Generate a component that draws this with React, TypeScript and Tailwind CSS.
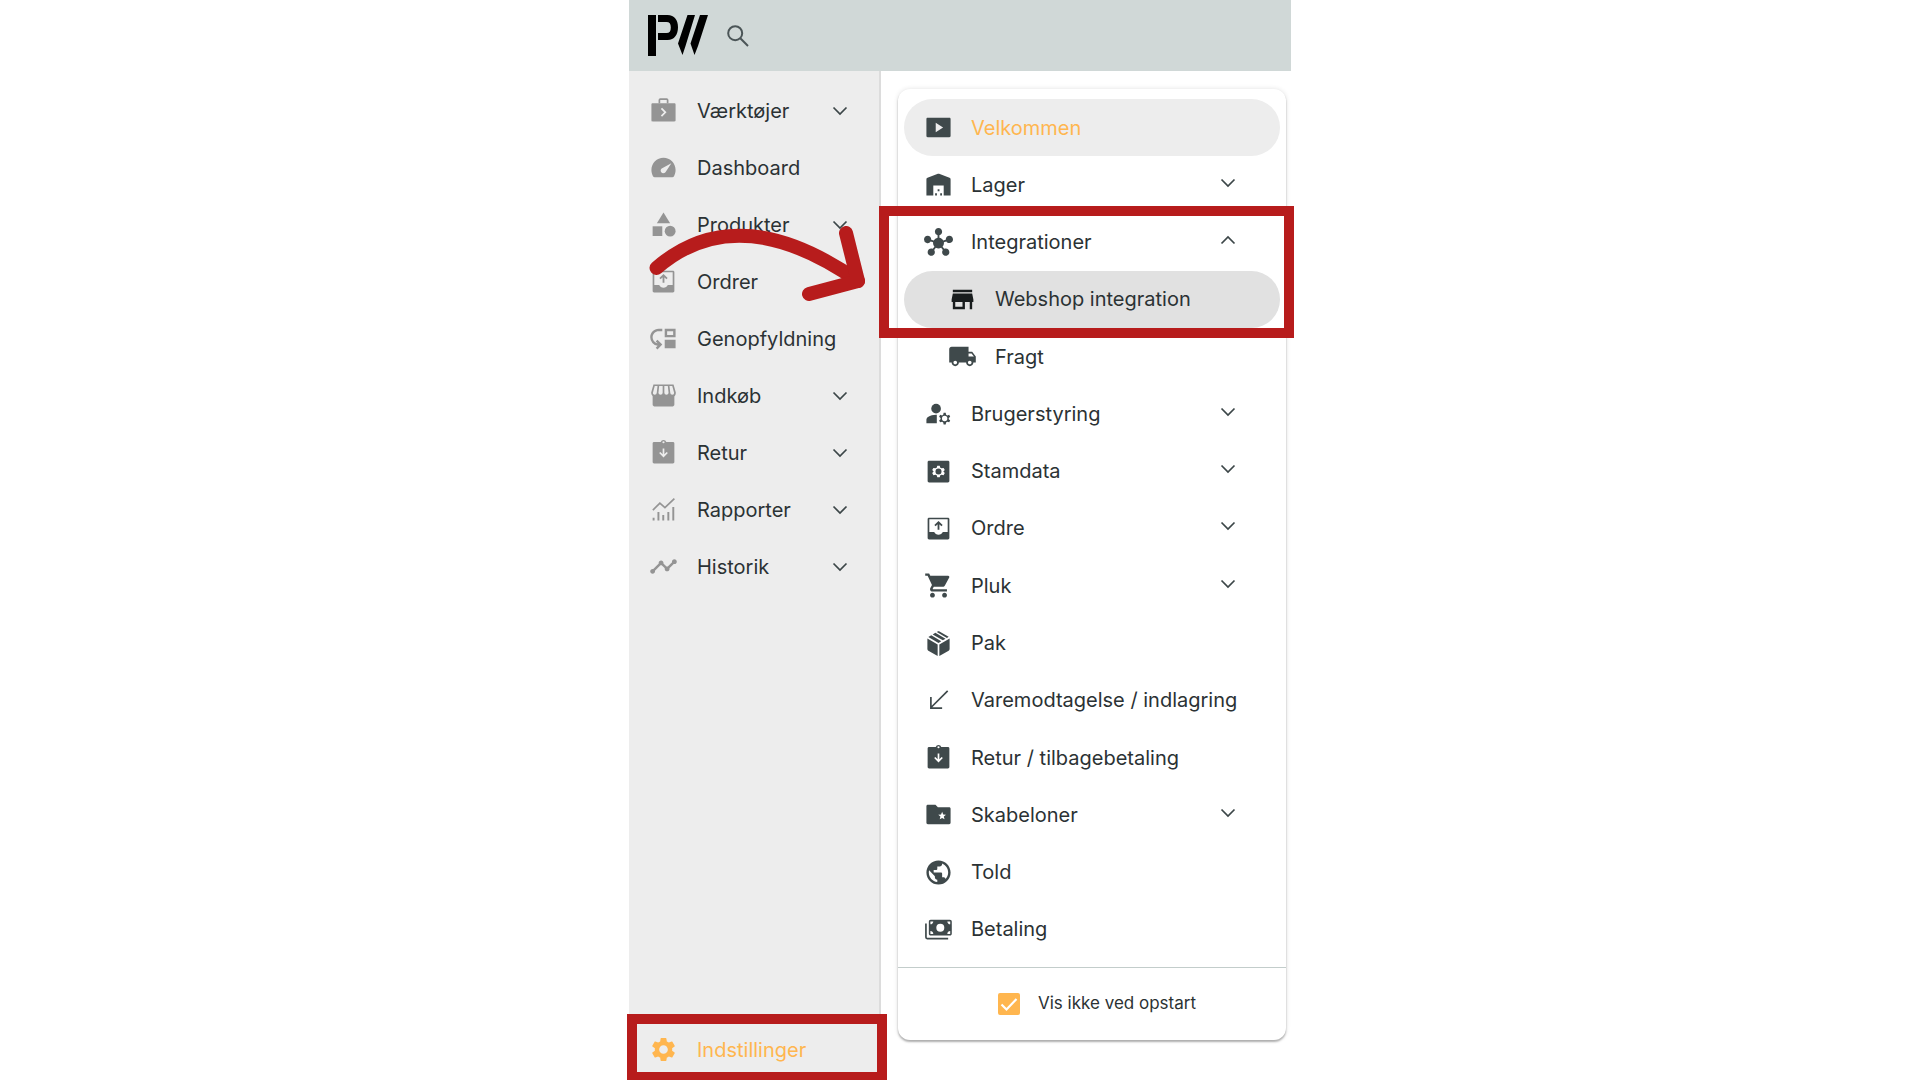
import type { ComponentType, ReactNode } from 'react';
import {
  MdCategory,
  MdHub,
  MdLocalShipping,
  MdMoveDown,
  MdPublic,
  MdSettings,
  MdShoppingCart,
  MdStore,
  MdTimeline,
} from 'react-icons/md';

type IconProps = { className?: string };
type Icon = ComponentType<IconProps>;

function Svg({ className, children }: { className?: string; children: ReactNode }) {
  return (
    <svg viewBox="0 0 24 24" fill="currentColor" className={className} aria-hidden="true">
      {children}
    </svg>
  );
}

function ToolsIcon({ className }: IconProps) {
  return (
    <Svg className={className}>
      <path d="M8.600 6V3.400C8.600 2.900 8.900 2.600 9.400 2.600h5.200c.5 0 .8.300.8.800V6" fill="none" stroke="currentColor" strokeWidth="1.400" />
      <path
        fillRule="evenodd"
        d="M3 6h18c.6 0 1 .4 1 1v13c0 .6-.4 1-1 1H3c-.6 0-1-.4-1-1V7c0-.6.4-1 1-1zM10.800 9.800l-1 1 2.700 2.700-2.700 2.700 1 1 3.700-3.700z"
      />
    </Svg>
  );
}

function GaugeIcon({ className }: IconProps) {
  return (
    <Svg className={className}>
      <path
        fillRule="evenodd"
        d="M12 4C6.500 4 2 8.500 2 14c0 1.900.5 3.700 1.300 5.200.3.500.8.800 1.400.8h14.600c.6 0 1.100-.3 1.400-.8.800-1.500 1.300-3.300 1.300-5.200 0-5.500-4.500-10-10-10zM18.500 8.500l-4.600 7.100c-.2.300-.4.500-.7.700-1.100.7-2.500.5-3.200-.6-.6-1-.4-2.200.5-2.900z"
      />
    </Svg>
  );
}

function TrayUpIcon({ className }: IconProps) {
  return (
    <Svg className={className}>
      <path
        fillRule="evenodd"
        d="M4.200 3h15.600c.7 0 1.200.5 1.200 1.200v15.600c0 .7-.5 1.200-1.200 1.200H4.200c-.7 0-1.200-.5-1.200-1.200V4.200C3 3.500 3.500 3 4.200 3zM4.400 4.400v10.400h4c.7 1.300 2 2.300 3.600 2.300s2.900-1 3.600-2.300h4V4.400z"
      />
      <path d="M12 13V7M9.100 9.700L12 6.800l2.900 2.900" fill="none" stroke="currentColor" strokeWidth="1.500" />
    </Svg>
  );
}

function ReturnIcon({ className }: IconProps) {
  return (
    <Svg className={className}>
      <path
        fillRule="evenodd"
        d="M4.200 3.300h5.500a2.400 2.400 0 0 1 4.600 0h5.500c.7 0 1.200.5 1.200 1.200v15.300c0 .7-.5 1.200-1.200 1.200H4.200c-.7 0-1.200-.5-1.200-1.200V4.500c0-.7.500-1.200 1.200-1.200zM12 2.600a.9.900 0 1 0 0 1.800.9.900 0 0 0 0-1.800zM11.300 8.600v4.800l-1.900-1.900-1 1 3.600 3.600 3.600-3.600-1-1-1.900 1.900V8.600z"
      />
    </Svg>
  );
}

function PlayIcon({ className }: IconProps) {
  return (
    <Svg className={className}>
      <path
        fillRule="evenodd"
        d="M3 4h18c.6 0 1 .4 1 1v14c0 .6-.4 1-1 1H3c-.6 0-1-.4-1-1V5c0-.6.4-1 1-1zM9.700 8.100v7.800l6.100-3.900z"
      />
    </Svg>
  );
}

function WarehouseIcon({ className }: IconProps) {
  return (
    <Svg className={className}>
      <path d="M2 7.800c0-.7.400-1.100.9-1.300L11.500 3.100c.3-.1.700-.1 1 0l8.600 3.400c.5.200.9.600.9 1.300V21h-5.700v-8.200H7.700V21H2z" />
      <path d="M11.300 16h1.500v1.500h-1.500zM9.200 19.300h1.500V21H9.200zM13.400 19.300h1.500V21h-1.500z" />
    </Svg>
  );
}

function GearBoxIcon({ className }: IconProps) {
  return (
    <Svg className={className}>
      <path
        fillRule="evenodd"
        d="M4.200 3h15.600c.7 0 1.200.5 1.200 1.200v15.600c0 .7-.5 1.200-1.200 1.200H4.200c-.7 0-1.200-.5-1.200-1.200V4.200C3 3.500 3.500 3 4.200 3zM11 7.200l-.5 1.600-1 .6L7.800 9l-1 1.700L8 12l-1.200 1.300 1 1.700 1.700-.4 1 .6.5 1.600h2l.5-1.600 1-.6 1.700.4 1-1.700L16 12l1.200-1.300-1-1.700-1.700.4-1-.6-.5-1.600zM12 9.500a2.500 2.500 0 1 1 0 5 2.500 2.500 0 0 1 0-5z"
      />
    </Svg>
  );
}

function UserGearIcon({ className }: IconProps) {
  return (
    <Svg className={className}>
      <circle cx="10" cy="8" r="4" />
      <path d="M2 20v-2.800c0-1 .5-1.800 1.300-2.300C5.200 13.700 7.600 13 10 13h.6v7z" />
      <g transform="translate(6.900 5.800) scale(.85)">
        <path
          fillRule="evenodd"
          d="M11 6.600l-.4 1.900-1.100.7-1.900-.6-1 1.800L8 11.600v1.300l-1.400 1.200 1 1.800 1.900-.6 1.100.7.400 1.900h2l.4-1.900 1.100-.7 1.900.6 1-1.800-1.400-1.200v-1.300l1.400-1.200-1-1.800-1.900.6-1.100-.7-.4-1.900zM12 9.600a2.600 2.600 0 1 1 0 5.200 2.600 2.600 0 0 1 0-5.200z"
        />
      </g>
    </Svg>
  );
}

function ShopIcon({ className }: IconProps) {
  return (
    <Svg className={className}>
      <path
        d="M4.200 3.500h15.600l1.700 6.200c0 1.600-1 2.500-2.300 2.500-1.300 0-2.300-.9-2.300-2.400 0 1.500-1 2.400-2.500 2.400S12 11.300 12 9.800c0 1.500-1 2.400-2.400 2.400s-2.500-.9-2.500-2.400c0 1.500-1 2.400-2.300 2.400-1.300 0-2.300-.9-2.300-2.500zM7.800 3.500l-.7 6.300M12 3.500v6.300M16.200 3.500l.7 6.300"
        fill="none"
        stroke="currentColor"
        strokeWidth="1.400"
      />
      <path d="M3 11.300h18v8.200c0 .8-.7 1.500-1.500 1.500h-15c-.8 0-1.500-.7-1.500-1.500z" />
    </Svg>
  );
}

function ReportIcon({ className }: IconProps) {
  return (
    <Svg className={className}>
      <path d="M3.200 12.500L9 6.700l4.200 3.700L21 3" fill="none" stroke="currentColor" strokeWidth="1.400" />
      <path d="M3 18.800h1.600V21H3zM7 14h1.600v7H7zM11 16.500h1.600V21H11zM15.200 14h1.600v7h-1.600zM19.300 10h1.600v11h-1.600z" />
    </Svg>
  );
}

function PackageIcon({ className }: IconProps) {
  return (
    <Svg className={className}>
      <path d="M2.800 7.900l8.500 4.900v9.500l-7.700-4.400c-.5-.3-.8-.8-.8-1.400zM21.200 7.900l-8.500 4.900v9.500l7.700-4.400c.5-.3.800-.8.800-1.400z" />
      <path d="M3.600 6.600L6 5.200l8.300 4.900L12 11.500zM7.200 4.500l2.200-1.300 8.400 4.900-2.200 1.300zM10.600 2.500l.7-.4c.5-.3 1-.3 1.500 0l7.600 4.400-1.400.9z" />
    </Svg>
  );
}

function InboundIcon({ className }: IconProps) {
  return (
    <Svg className={className}>
      <path d="M19.600 4L6 17.600M5.700 9v9.300H15" fill="none" stroke="currentColor" strokeWidth="1.400" />
    </Svg>
  );
}

function TemplatesIcon({ className }: IconProps) {
  return (
    <Svg className={className}>
      <path
        fillRule="evenodd"
        d="M3.200 4h6.300l2 2h9.300c.7 0 1.200.5 1.200 1.200v11.600c0 .7-.5 1.200-1.200 1.200H3.200c-.7 0-1.200-.5-1.200-1.200V5.200C2 4.500 2.500 4 3.200 4zM15 9.800l-.9 2.200-2.300.2 1.800 1.500-.6 2.300 2-1.200 2 1.200-.6-2.300 1.800-1.500-2.300-.2z"
      />
    </Svg>
  );
}

function CashIcon({ className }: IconProps) {
  return (
    <Svg className={className}>
      <path d="M1.600 7v11.500c0 .6.4 1 1 1H20" fill="none" stroke="currentColor" strokeWidth="1.400" />
      <path
        fillRule="evenodd"
        d="M5.500 4h16c.8 0 1.500.7 1.500 1.500v10c0 .8-.7 1.500-1.500 1.500h-16c-.8 0-1.500-.7-1.500-1.500v-10C4 4.700 4.700 4 5.500 4zM13.500 7.200a3.300 3.300 0 1 0 0 6.600 3.300 3.300 0 0 0 0-6.600zM5.300 5.300v2.400c1.300 0 2.400-1.100 2.400-2.400zM21.700 5.300h-2.400c0 1.300 1.100 2.400 2.400 2.400zM5.300 15.700h2.400c0-1.300-1.100-2.400-2.400-2.400zM21.700 15.700v-2.400c-1.300 0-2.400 1.100-2.400 2.400z"
      />
    </Svg>
  );
}

function SearchIcon({ className }: IconProps) {
  return (
    <svg viewBox="0 0 24 24" fill="none" stroke="currentColor" strokeWidth="2" className={className} aria-hidden="true">
      <circle cx="9.200" cy="9.200" r="7" />
      <path d="M14.300 14.300L22 22" />
    </svg>
  );
}

function Chevron({ up = false }: { up?: boolean }) {
  return (
    <svg viewBox="0 0 16 16" fill="none" stroke="currentColor" strokeWidth="1.700" className="size-4 shrink-0 text-[#3c4648]" aria-hidden="true">
      <path d={up ? 'M1.500 11.500L8 5l6.500 6.500' : 'M1.500 4.500L8 11l6.500-6.500'} />
    </svg>
  );
}

function Logo() {
  return (
    <svg viewBox="0 0 60 41" className="h-[41px] w-[60px]" role="img" aria-label="PW">
      <path d="M0 0h8v41H0z" />
      <path d="M10 0h9.500C26.500 0 30 5 30 12.200S26.500 25 19.500 25H10v-7h8.500c3 0 4.300-2 4.300-5.600S21.500 7 18.500 7H10z" />
      <path d="M39.500 0H47L37.500 31 34.500 40 30 28.500zM52 0h8L50 31l-3.500 9L42.500 28.500z" />
    </svg>
  );
}

type Item = { label: string; icon: Icon; open?: boolean; chevron?: boolean };

const sidebarItems: Item[] = [
  { label: 'Værktøjer', icon: ToolsIcon, chevron: true },
  { label: 'Dashboard', icon: GaugeIcon },
  { label: 'Produkter', icon: MdCategory, chevron: true },
  { label: 'Ordrer', icon: TrayUpIcon },
  { label: 'Genopfyldning', icon: MdMoveDown },
  { label: 'Indkøb', icon: ShopIcon, chevron: true },
  { label: 'Retur', icon: ReturnIcon, chevron: true },
  { label: 'Rapporter', icon: ReportIcon, chevron: true },
  { label: 'Historik', icon: MdTimeline, chevron: true },
];

type Setting = Item & { nested?: boolean; state?: 'current' | 'hover'; framed?: boolean };

const settings: Setting[] = [
  { label: 'Velkommen', icon: PlayIcon, state: 'current' },
  { label: 'Lager', icon: WarehouseIcon, chevron: true },
  { label: 'Integrationer', icon: MdHub, chevron: true, open: true, framed: true },
  { label: 'Webshop integration', icon: MdStore, nested: true, state: 'hover' },
  { label: 'Fragt', icon: MdLocalShipping, nested: true },
  { label: 'Brugerstyring', icon: UserGearIcon, chevron: true },
  { label: 'Stamdata', icon: GearBoxIcon, chevron: true },
  { label: 'Ordre', icon: TrayUpIcon, chevron: true },
  { label: 'Pluk', icon: MdShoppingCart, chevron: true },
  { label: 'Pak', icon: PackageIcon },
  { label: 'Varemodtagelse / indlagring', icon: InboundIcon },
  { label: 'Retur / tilbagebetaling', icon: ReturnIcon },
  { label: 'Skabeloner', icon: TemplatesIcon, chevron: true },
  { label: 'Told', icon: MdPublic },
  { label: 'Betaling', icon: CashIcon },
];

function SidebarRow({ item }: { item: Item }) {
  const ItemIcon = item.icon;
  return (
    <li>
      <button type="button" className="flex h-[57px] w-full items-center pr-[31px] pl-5 text-left">
        <ItemIcon className="size-[29px] shrink-0 text-[#949494]" />
        <span className="ml-[19px] flex-1 pt-px whitespace-nowrap">{item.label}</span>
        {item.chevron && <Chevron />}
      </button>
    </li>
  );
}

function SettingRow({ item }: { item: Setting }) {
  const ItemIcon = item.icon;
  const background = item.state === 'current' ? 'bg-[#ededed]' : item.state === 'hover' ? 'bg-[#e1e1e1]' : '';
  const iconColor = item.state === 'hover' ? 'text-[#181c1d]' : 'text-[#3f494b]';
  return (
    <li className="relative flex min-h-10 flex-1">
      <button
        type="button"
        className={`flex w-full min-w-0 items-center rounded-full text-left ${item.chevron ? 'pr-11' : 'pr-5'} ${item.nested ? 'pl-11' : 'pl-5'} ${background}`}
      >
        <ItemIcon className={`size-[29px] shrink-0 ${iconColor}`} />
        <span className={`ml-[18px] flex-1 whitespace-nowrap ${item.state === 'current' ? 'text-[#ffb64f]' : ''}`}>
          {item.label}
        </span>
        {item.chevron && (
          <span className="pb-1">
            <Chevron up={item.open} />
          </span>
        )}
      </button>
      {item.framed && (
        <div className="pointer-events-none absolute -top-2 -right-[14px] -left-[25px] z-10 h-[132px] border-10 border-[#b71c1c]" />
      )}
    </li>
  );
}

export default function App() {
  return (
    <div className="h-screen overflow-hidden bg-white font-['Inter',sans-serif] text-[20px] text-[#2b3234]">
      <div className="mx-auto flex h-full max-w-[662px] flex-col">
        <header className="flex h-[71px] shrink-0 items-center bg-[#d0d8d7] pl-[19px]">
          <Logo />
          <button type="button" aria-label="Søg" className="ml-[18px] text-[#4b5557]">
            <SearchIcon className="size-6" />
          </button>
        </header>

        <div className="flex min-h-0 flex-1">
          <aside className="relative flex w-[252px] shrink-0 flex-col border-r-2 border-[#dcdcdc] bg-[#ededed] pt-[11px]">
            <nav>
              <ul>
                {sidebarItems.map((item) => (
                  <SidebarRow key={item.label} item={item} />
                ))}
              </ul>
            </nav>
            <div className="relative mt-auto">
              <button type="button" className="flex h-[62px] w-full items-center pl-5 text-left text-[#ffb64f]">
                <MdSettings className="size-[29px] shrink-0" />
                <span className="ml-[19px] pt-px">Indstillinger</span>
              </button>
              <div className="pointer-events-none absolute -top-1 -right-2 -bottom-0.5 -left-0.5 border-10 border-[#b71c1c]" />
            </div>
            <svg
              viewBox="0 0 216 76"
              fill="none"
              stroke="#b71c1c"
              strokeWidth="14"
              strokeLinecap="round"
              strokeLinejoin="round"
              className="pointer-events-none absolute top-[155px] left-5 h-[76px] w-[216px]"
              aria-hidden="true"
            >
              <path d="M7.500 42C66 -9 136 4 209 55" />
              <path d="M197 7l12 48-49 13" />
            </svg>
          </aside>

          <main className="flex min-w-0 flex-1 pt-[18px] pr-[5px] pb-10 pl-[17px]">
            <section className="flex min-w-0 flex-1 flex-col rounded-xl bg-white shadow-[0_2px_2px_rgba(0,0,0,0.28),0_0_5px_rgba(0,0,0,0.12)]">
              <ul className="flex flex-1 flex-col px-1.5 pt-2.5 pb-[9px]">
                {settings.map((item) => (
                  <SettingRow key={item.label} item={item} />
                ))}
              </ul>
              <div className="flex h-[73px] items-center justify-center gap-[18px] border-t border-[#c3cdcb] pl-2.5 text-[17px]">
                <div className="relative size-[22px]">
                  <input
                    id="hide-at-start"
                    type="checkbox"
                    defaultChecked
                    className="peer block size-full appearance-none rounded-xs border-2 border-[#ffb64f] checked:bg-[#ffb64f]"
                  />
                  <svg
                    viewBox="0 0 22 22"
                    fill="none"
                    stroke="white"
                    strokeWidth="2.2"
                    className="pointer-events-none absolute inset-0 hidden peer-checked:block"
                    aria-hidden="true"
                  >
                    <path d="M3.500 11.500l5 5L18.500 6" />
                  </svg>
                </div>
                <label htmlFor="hide-at-start">Vis ikke ved opstart</label>
              </div>
            </section>
          </main>
        </div>
      </div>
    </div>
  );
}
